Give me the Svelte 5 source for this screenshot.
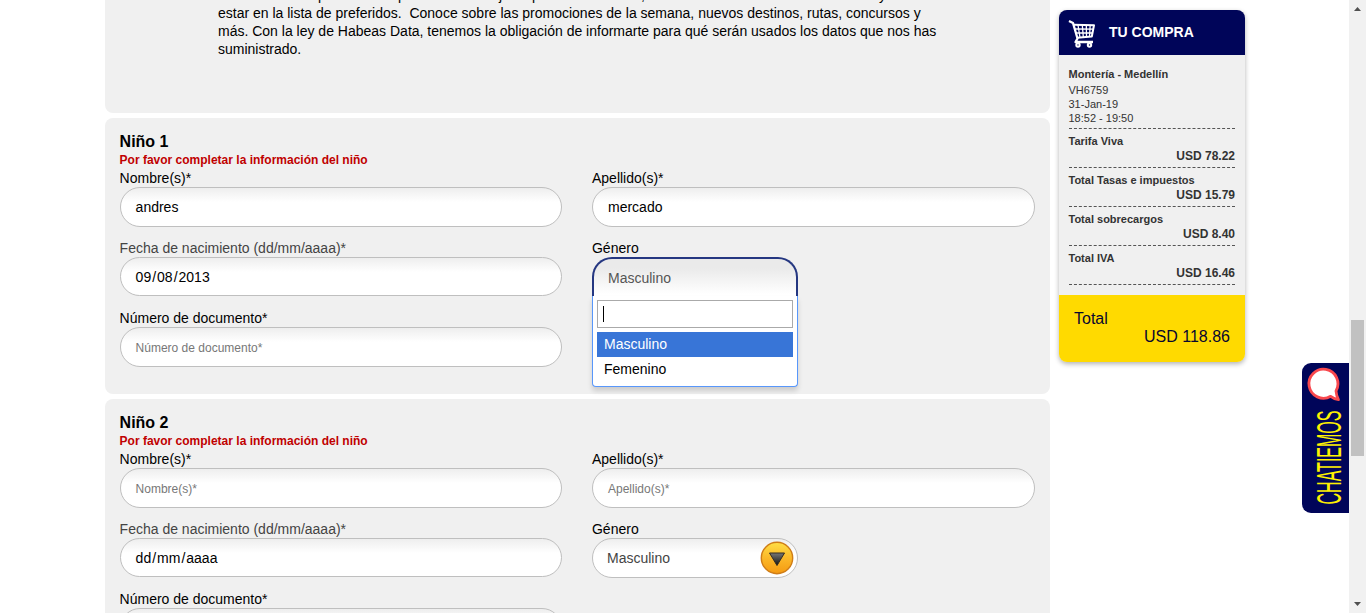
<script>
  const children = [
    { title: 'Niño 1', name: 'andres', surname: 'mercado', date: '09/08/2013', open: true },
    { title: 'Niño 2', name: '', surname: '', date: 'dd/mm/aaaa', open: false }
  ];
  const charges = [
    ['Tarifa Viva', 'USD 78.22'],
    ['Total Tasas e impuestos', 'USD 15.79'],
    ['Total sobrecargos', 'USD 8.40'],
    ['Total IVA', 'USD 16.46']
  ];
</script>

<div class="page">
  <main>
    <section class="panel intro">
      <div class="lead"><span style="width:80px">p</span><span style="width:101px">p</span><span style="width:33px">j</span><span style="width:109px">p</span><span style="width:238px">,</span><span>y</span></div>
      <p>estar en la lista de preferidos.&nbsp; Conoce sobre las promociones de la semana, nuevos destinos, rutas, concursos y<br />más. Con la ley de Habeas Data, tenemos la obligación de informarte para qué serán usados los datos que nos has<br />suministrado.</p>
    </section>
    {#each children as c}
      <section class="panel child">
        <h2>{c.title}</h2>
        <div class="error">Por favor completar la información del niño</div>
        <div class="grid">
          <div class="field">
            <div class="label">Nombre(s)*</div>
            <div class="input" class:empty={!c.name}>{c.name || 'Nombre(s)*'}</div>
          </div>
          <div class="field">
            <div class="label">Apellido(s)*</div>
            <div class="input" class:empty={!c.surname}>{c.surname || 'Apellido(s)*'}</div>
          </div>
          <div class="field">
            <div class="label soft">Fecha de nacimiento (dd/mm/aaaa)*</div>
            <div class="input date">{#each c.date.split('/') as part, i}{#if i}<span class="sep">/</span>{/if}{part}{/each}</div>
          </div>
          <div class="field">
            <div class="label">Género</div>
            {#if c.open}
              <div class="select open">Masculino
                <div class="menu">
                  <div class="search"><i></i></div>
                  <div class="option active">Masculino</div>
                  <div class="option">Femenino</div>
                </div>
              </div>
            {:else}
              <div class="select">Masculino
                <svg width="34" height="34" viewBox="0 0 34 34">
                  <defs>
                    <linearGradient id="gold" x1="0" y1="0" x2="0" y2="1"><stop offset="0" stop-color="#ffdf45" /><stop offset=".5" stop-color="#fbb829" /><stop offset="1" stop-color="#f59a12" /></linearGradient>
                    <linearGradient id="tri" x1="0" y1="0" x2="0" y2="1"><stop offset="0" stop-color="#777" /><stop offset="1" stop-color="#111" /></linearGradient>
                  </defs>
                  <circle cx="17" cy="17" r="15.7" fill="url(#gold)" stroke="#cf7d18" stroke-width="1.4" />
                  <path d="M9.5 12H24.5L17 24.5Z" fill="url(#tri)" stroke="#332a20" stroke-width="1" />
                </svg>
              </div>
            {/if}
          </div>
          <div class="field">
            <div class="label">Número de documento*</div>
            <div class="input empty">Número de documento*</div>
          </div>
        </div>
      </section>
    {/each}
  </main>

  <aside>
    <header>
      <svg width="28" height="33" viewBox="0 0 28 33" fill="none" stroke="#fff" stroke-linejoin="round">
        <path d="M1 6L5 8L9.500 23.500L7.500 27H25" stroke-width="2.300" />
        <path d="M5.500 9.800L26 10.300L23.800 21.500L9 22.800" stroke-width="2" />
        <path d="M6.500 14L25 14.200M7.500 18L24.500 18M10 10L12 22.500M14.300 10L15.300 22M18.300 10L18.500 21.500M22.200 10L21.500 21.500" stroke-width="1.300" />
        <circle cx="10" cy="30" r="1.700" stroke-width="2" /><circle cx="21.500" cy="30" r="1.700" stroke-width="2" />
      </svg>
      TU COMPRA
    </header>
    <div class="details">
      <div class="flight"><b>Montería - Medellín</b>VH6759<br />31-Jan-19<br />18:52 - 19:50</div>
      {#each charges as [label, amount]}
        <div class="charge"><span>{label}</span><strong>{amount}</strong></div>
      {/each}
    </div>
    <div class="total"><span>Total</span><span class="sum">USD 118.86</span></div>
  </aside>

  <div class="chat">
    <svg width="47" height="150" viewBox="0 0 47 150">
      <path transform="translate(-.8 .5)" d="M34.800 27.500A14.500 14.500 0 1 0 29.500 32.800Q33 35.500 37.200 36.200Q35.200 32 34.800 27.500Z" fill="#fff" stroke="#f8484e" stroke-width="2.800" stroke-linejoin="round" />
      <text transform="translate(39 141.500) rotate(-90)" textLength="94" lengthAdjust="spacingAndGlyphs">CHATIEMOS</text>
    </svg>
  </div>

  <div class="scrollbar">
    <svg width="17" height="17"><path d="M5 11H12L8.500 7Z" fill="#505050" /></svg>
    <div class="thumb"></div>
    <svg width="17" height="17"><path d="M5 6H12L8.500 10Z" fill="#505050" /></svg>
  </div>
</div>

<style>
  :global(body) { margin: 0; overflow: hidden; background: #fff; }
  .page { position: relative; display: flex; align-items: flex-start; box-sizing: border-box; width: 1366px; height: 613px; padding-left: 105px; overflow: hidden; font: 14px/18px "Liberation Sans", Arial, sans-serif; color: #000; }
  .page * { box-sizing: border-box; }
  main { width: 945px; flex: none; display: flex; flex-direction: column; gap: 5px; }
  .panel { background: #f0f0f0; border-radius: 8px; }
  .intro { height: 113px; padding-left: 113px; border-top-left-radius: 0; border-top-right-radius: 0; }
  .intro p { margin: 0; white-space: nowrap; }
  .lead { display: flex; height: 18px; margin-top: -14px; padding-left: 100px; }
  .lead span { flex: none; }
  .child { height: 276px; padding: 15px 15px 0 14.6px; }
  h2 { margin: 0; font-size: 16px; line-height: 18px; height: 18px; }
  .error { height: 17px; line-height: 18px; color: #c00000; font-size: 12px; font-weight: bold; }
  .grid { display: grid; grid-template-columns: 442px 443px; column-gap: 30.4px; grid-auto-rows: 70px; }
  .label { height: 19px; line-height: 20px; }
  .soft { color: #444; }
  .input { height: 40px; padding-left: 15px; line-height: 38px; border: 1px solid #bfbfbf; border-radius: 20px; background: linear-gradient(#eee 0, #fff 14px); }
  .date { height: 39px; }
  .sep { padding: 0 1px; }
  .empty { font-size: 12px; color: #777; line-height: 40px; }
  .select { position: relative; width: 206px; height: 40px; padding: 0 2.5px 0 14px; line-height: 38px; color: #444; border: 1px solid #bfbfbf; border-radius: 20px; background: linear-gradient(#eee 0, #fff 14px); display: flex; align-items: center; justify-content: space-between; }
  .open { height: 39px; border: 2px solid #253781; border-bottom: 0; border-radius: 20px 20px 0 0; background: linear-gradient(#eaeaea 25%, #fff 95%); color: #555; }
  .menu { position: absolute; z-index: 2; left: -2px; top: 37px; width: 206px; height: 91px; padding: 4px; border: 1px solid #5897fb; border-top: 0; border-radius: 0 0 4px 4px; background: #fff; box-shadow: 0 4px 5px rgba(0,0,0,.15); color: #000; }
  .search { height: 28px; margin-bottom: 4px; border: 1px solid #aaa; padding: 5px; }
  .search i { display: block; width: 1px; height: 16px; background: #000; }
  .option { height: 25px; padding-left: 7px; line-height: 25px; }
  .active { background: #3875d7; color: #fff; }
  aside { width: 186px; height: 352px; margin: 10px 0 0 9px; border-radius: 8px; background: #f0f0f0; box-shadow: 0 2px 5px rgba(0,0,0,.3); color: #333; overflow: hidden; }
  header { height: 45px; padding: 0 0 2px 9px; display: flex; align-items: center; gap: 13px; background: #000559; color: #fff; font-weight: bold; }
  .details { height: 240px; padding: 11px 10px 0 9.5px; font-size: 11px; }
  .flight { height: 63px; line-height: 14px; border-bottom: 1px dashed #555; }
  .flight b { display: block; height: 17px; line-height: 17px; }
  .charge { height: 39px; padding-top: 5px; border-bottom: 1px dashed #555; font-weight: bold; line-height: 15px; }
  .charge span, .charge strong { display: block; }
  .charge strong { text-align: right; font-size: 12px; }
  .total { height: 67px; padding: 15px 15px 0; background: #ffda00; color: #07072f; font-size: 16px; }
  .total span { display: block; }
  .total .sum { text-align: right; }
  .chat { position: absolute; left: 1302px; top: 363px; width: 47px; height: 150px; background: #000559; border-radius: 9px 0 0 9px; overflow: hidden; }
  .chat svg { display: block; }
  .chat text { font-size: 35px; fill: #fff200; }
  .scrollbar { width: 17px; height: 613px; margin-left: auto; background: #f1f1f1; display: flex; flex-direction: column; justify-content: space-between; }
  .scrollbar svg { display: block; }
  .thumb { width: 13px; height: 136px; margin: 286px 0 123px 2px; background: #c1c1c1; }
</style>
